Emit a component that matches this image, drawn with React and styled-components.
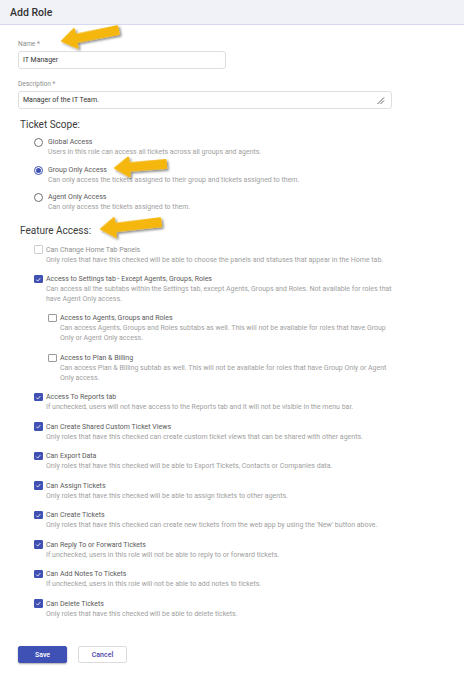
import React from 'react';
import styled, { createGlobalStyle } from 'styled-components';

const Global = createGlobalStyle`
  html, body { margin: 0; padding: 0; background: #fff; }
  body { font-family: Roboto, "Liberation Sans", sans-serif; -webkit-font-smoothing: antialiased; }
  * { box-sizing: border-box; }
`;

const Page = styled.div`
  position: relative;
  width: 464px;
  min-height: 675px;
  background: #fff;
`;

const Header = styled.div`
  height: 25px;
  background: #f1f2f7;
  border-bottom: 1px solid #d5d8ee;
  display: flex;
  align-items: center;
  padding-left: 10px;
  font-size: 10.5px;
  font-weight: 500;
  color: #333;
`;

const Form = styled.div`
  padding: 14px 18px 0;
  width: 410px;
`;

const Field = styled.div`
  margin-bottom: 10px;
`;

const Label = styled.div`
  font-size: 6.5px;
  line-height: 10px;
  color: #8c8c8c;
  margin-bottom: 2px;
`;

const Input = styled.div`
  width: ${p => p.$w};
  height: 18px;
  border: 1px solid #dedede;
  border-radius: 3px;
  display: flex;
  align-items: center;
  justify-content: space-between;
  padding: 0 6px 0 4px;
  font-size: 7px;
  color: #333;
`;

const SectionTitle = styled.div`
  font-size: 10px;
  line-height: 12px;
  font-weight: 400;
  color: #3a3a3a;
  padding-left: 2px;
  margin-top: ${p => p.$mt}px;
`;

const OptionList = styled.div`
  display: flex;
  flex-direction: column;
  gap: ${p => p.$gap}px;
  margin-top: ${p => p.$mt}px;
  padding-left: ${p => p.$indent}px;
`;

const Option = styled.div`
  display: flex;
  align-items: flex-start;
`;

const Radio = styled.span`
  flex: none;
  width: 9px;
  height: 9px;
  border-radius: 50%;
  border: 1px solid ${p => (p.$on ? '#3f51b5' : '#6f6f6f')};
  margin-right: 5px;
  display: flex;
  align-items: center;
  justify-content: center;
  &::after {
    content: '';
    width: 5px;
    height: 5px;
    border-radius: 50%;
    background: ${p => (p.$on ? '#3f51b5' : 'transparent')};
  }
`;

const Box = styled.span`
  flex: none;
  width: 8.5px;
  height: 8.5px;
  margin-top: 1.75px;
  margin-right: 3.5px;
  border-radius: 1px;
  border: 1px solid ${p => (p.$on ? '#3f51b5' : p.$off ? '#d0d0d0' : '#9a9a9a')};
  background: ${p => (p.$on ? '#4150b3' : '#fff')};
  display: flex;
  align-items: center;
  justify-content: center;
`;

const Texts = styled.div`
  flex: 1;
  min-width: 0;
`;

const Title = styled.div`
  font-size: 7px;
  line-height: ${p => p.$lh}px;
  color: ${p => (p.$off ? '#909090' : '#5a5a5a')};
`;

const Desc = styled.div`
  font-size: 7px;
  line-height: ${p => p.$lh}px;
  color: #a0a0a0;
`;

const Nested = styled.div`
  display: flex;
  flex-direction: column;
  gap: 9px;
  margin-top: 8px;
  margin-left: 2px;
`;

const Buttons = styled.div`
  display: flex;
  gap: 11px;
  margin-top: 27px;
  padding-bottom: 11px;
`;

const Button = styled.button`
  width: 49px;
  height: 17px;
  border-radius: 2px;
  font-family: Roboto, "Liberation Sans", sans-serif;
  font-size: 7px;
  font-weight: 500;
  cursor: pointer;
  border: 1px solid ${p => (p.$primary ? '#3f51b5' : '#dcdcdc')};
  background: ${p => (p.$primary ? '#4051b5' : '#fff')};
  color: ${p => (p.$primary ? '#fff' : '#4a3fa8')};
  box-shadow: ${p => (p.$primary ? '0 1px 2px rgba(0,0,0,0.35)' : 'none')};
`;

const Overlay = styled.svg`
  position: absolute;
  left: 0;
  top: 0;
  pointer-events: none;
`;

const Check = () => (
  <svg width="7" height="7" viewBox="0 0 10 10">
    <path d="M2 5.2 L4.2 7.4 L8.2 2.8" fill="none" stroke="#fff" strokeWidth="1.3" />
  </svg>
);

const ResizeIcon = () => (
  <svg width="9" height="9" viewBox="0 0 9 9">
    <path d="M1.5 8 L8 1.5 M4.5 8 L8 4.5" stroke="#555" strokeWidth="0.9" />
  </svg>
);

const scope = [
  ['Global Access', 'Users in this role can access all tickets across all groups and agents.', false],
  ['Group Only Access', 'Can only access the tickets assigned to their group and tickets assigned to them.', true],
  ['Agent Only Access', 'Can only access the tickets assigned to them.', false],
];

const nested = [
  ['Access to Agents, Groups and Roles', 'Can access Agents, Groups and Roles subtabs as well. This will not be available for roles that have Group Only or Agent Only access.'],
  ['Access to Plan & Billing', 'Can access Plan & Billing subtab as well. This will not be available for roles that have Group Only or Agent Only access.'],
];

const features = [
  ['Access To Reports tab', 'If unchecked, users will not have access to the Reports tab and it will not be visible in the menu bar.'],
  ['Can Create Shared Custom Ticket Views', 'Only roles that have this checked can create custom ticket views that can be shared with other agents.'],
  ['Can Export Data', 'Only roles that have this checked will be able to Export Tickets, Contacts or Companies data.'],
  ['Can Assign Tickets', 'Only roles that have this checked will be able to assign tickets to other agents.'],
  ['Can Create Tickets', "Only roles that have this checked can create new tickets from the web app by using the 'New' button above."],
  ['Can Reply To or Forward Tickets', 'If unchecked, users in this role will not be able to reply to or forward tickets.'],
  ['Can Add Notes To Tickets', 'If unchecked, users in this role will not be able to add notes to tickets.'],
  ['Can Delete Tickets', 'Only roles that have this checked will be able to delete tickets.'],
];

const arrows = [
  { x: 62, y: 41, a: -11, l: 57 },
  { x: 115, y: 168, a: -4.5, l: 51 },
  { x: 101, y: 229, a: -6.5, l: 60 },
];

const Arrow = ({ x, y, a, l }) => (
  <g transform={`translate(${x} ${y}) rotate(${a})`}>
    <polygon
      points={`0,0 14,-9.5 14,-3.6 ${l},-4 ${l},4 14,3.6 14,9.5`}
      fill="#f5b60c"
      stroke="#f5b60c"
      strokeWidth="2"
      strokeLinejoin="round"
      filter="url(#sh)"
    />
  </g>
);

export default function App() {
  return (
    <Page>
      <Global />
      <Header>Add Role</Header>
      <Form>
        <Field>
          <Label>Name *</Label>
          <Input $w="208px">IT Manager</Input>
        </Field>
        <Field>
          <Label>Description *</Label>
          <Input $w="374px">
            <span>Manager of the IT Team.</span>
            <ResizeIcon />
          </Input>
        </Field>

        <SectionTitle $mt={1}>Ticket Scope:</SectionTitle>
        <OptionList $gap={8.5} $mt={7} $indent={16}>
          {scope.map(([t, d, on]) => (
            <Option key={t}>
              <Radio $on={on} />
              <Texts>
                <Title $lh={9}>{t}</Title>
                <Desc $lh={10}>{d}</Desc>
              </Texts>
            </Option>
          ))}
        </OptionList>

        <SectionTitle $mt={12.5}>Feature Access:</SectionTitle>
        <OptionList $gap={8} $mt={7} $indent={16}>
          <Option>
            <Box $off />
            <Texts>
              <Title $lh={12} $off>Can Change Home Tab Panels</Title>
              <Desc $lh={9.5}>Only roles that have this checked will be able to choose the panels and statuses that appear in the Home tab.</Desc>
            </Texts>
          </Option>
          <Option>
            <Box $on><Check /></Box>
            <Texts>
              <Title $lh={12}>Access to Settings tab - Except Agents, Groups, Roles</Title>
              <Desc $lh={9.5}>Can access all the subtabs within the Settings tab, except Agents, Groups and Roles. Not available for roles that have Agent Only access.</Desc>
              <Nested>
                {nested.map(([t, d]) => (
                  <Option key={t}>
                    <Box />
                    <Texts>
                      <Title $lh={12}>{t}</Title>
                      <Desc $lh={9.5}>{d}</Desc>
                    </Texts>
                  </Option>
                ))}
              </Nested>
            </Texts>
          </Option>
          {features.map(([t, d]) => (
            <Option key={t}>
              <Box $on><Check /></Box>
              <Texts>
                <Title $lh={12}>{t}</Title>
                <Desc $lh={9.5}>{d}</Desc>
              </Texts>
            </Option>
          ))}
        </OptionList>

        <Buttons>
          <Button $primary>Save</Button>
          <Button>Cancel</Button>
        </Buttons>
      </Form>
      <Overlay width="464" height="675" viewBox="0 0 464 675">
        <defs>
          <filter id="sh" x="-30%" y="-60%" width="160%" height="220%">
            <feDropShadow dx="1.5" dy="2" stdDeviation="1.2" floodColor="#000" floodOpacity="0.45" />
          </filter>
        </defs>
        {arrows.map((p, i) => <Arrow key={i} {...p} />)}
      </Overlay>
    </Page>
  );
}
